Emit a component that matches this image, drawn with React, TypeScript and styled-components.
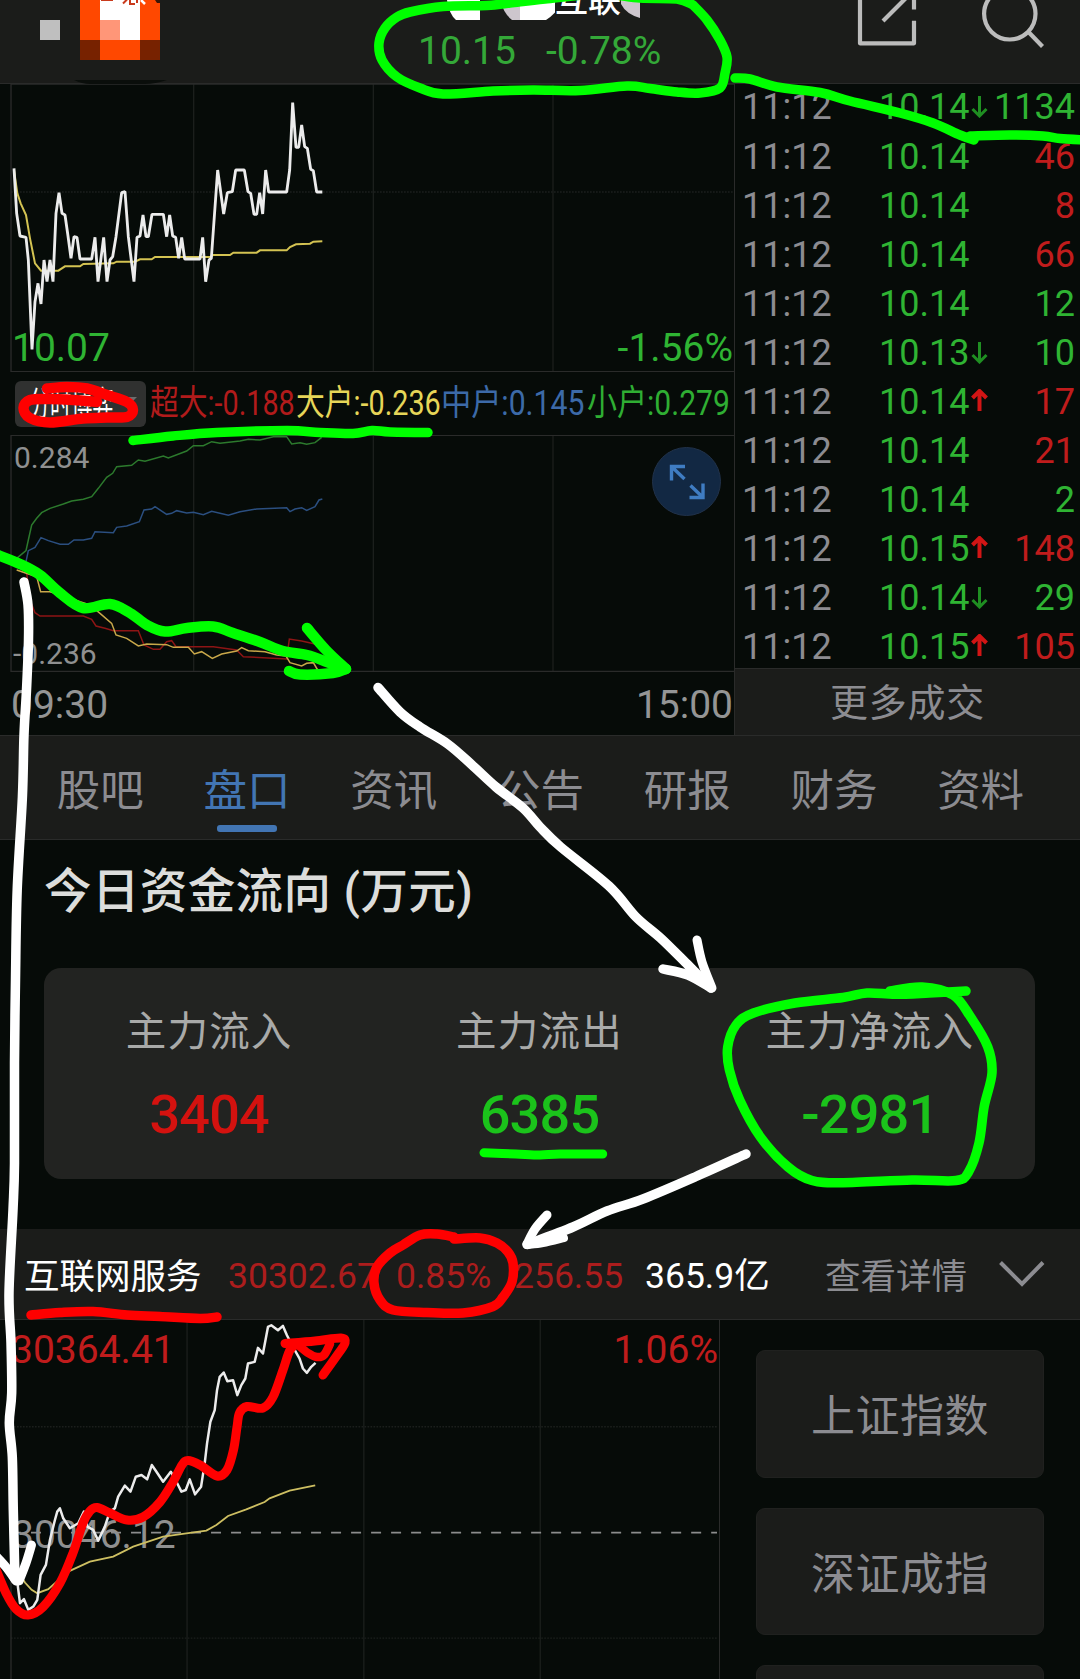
import React from "react";
import styled, { createGlobalStyle, css } from "styled-components";

const colors = {
  page: "#060b08",
  panel: "#1b1c1a",
  card: "#222321",
  line: "#2a2b2a",
  grid: "#1b1f1c",
  up: "#c01c1c",
  down: "#2fb433",
  muted: "#8c8c91",
  blue: "#4275b3",
};

type Point = [number, number];
type Direction = "up" | "down";

const GlobalStyle = createGlobalStyle`
  * {
    box-sizing: border-box;
  }
  html,
  body {
    margin: 0;
    background: ${colors.page};
  }
  body {
    font-family: Roboto, "Noto Sans CJK SC", sans-serif;
    font-weight: 400;
  }
`;

// Catmull-Rom through the given points, written as cubic beziers
const smooth = (points: Point[]) =>
  points.reduce((path, [x, y], i) => {
    if (i === 0) return `M${x} ${y}`;
    const [ax, ay] = points[Math.max(i - 2, 0)];
    const [bx, by] = points[i - 1];
    const [dx, dy] = points[Math.min(i + 1, points.length - 1)];
    return `${path} C${bx + (x - ax) / 6} ${by + (y - ay) / 6} ${x - (dx - bx) / 6} ${y - (dy - by) / 6} ${x} ${y}`;
  }, "");

const trades: { price: string; move?: Direction; volume: string; side: Direction }[] = [
  { price: "10.14", move: "down", volume: "1134", side: "down" },
  { price: "10.14", volume: "46", side: "up" },
  { price: "10.14", volume: "8", side: "up" },
  { price: "10.14", volume: "66", side: "up" },
  { price: "10.14", volume: "12", side: "down" },
  { price: "10.13", move: "down", volume: "10", side: "down" },
  { price: "10.14", move: "up", volume: "17", side: "up" },
  { price: "10.14", volume: "21", side: "up" },
  { price: "10.14", volume: "2", side: "down" },
  { price: "10.15", move: "up", volume: "148", side: "up" },
  { price: "10.14", move: "down", volume: "29", side: "down" },
  { price: "10.15", move: "up", volume: "105", side: "up" },
];

const legend = [
  { text: "超大:-0.188", color: "#b11b1b", stretch: 0.822 },
  { text: "大户:-0.236", color: "#e6d658", stretch: 0.822 },
  { text: "中户:0.145", color: "#3c6aa8", stretch: 0.862 },
  { text: "小户:0.279", color: "#2fae33", stretch: 0.858 },
];

const tabs = ["股吧", "盘口", "资讯", "公告", "研报", "财务", "资料"];

const flows: { label: string; value: string; side: Direction }[] = [
  { label: "主力流入", value: "3404", side: "up" },
  { label: "主力流出", value: "6385", side: "down" },
  { label: "主力净流入", value: "-2981", side: "down" },
];

// Chart series, in thirds of a pixel
const priceLine =
  "42,505 50,640 60,708 78,712 85,780 96,1048 105,905 114,850 123,912 132,780 141,845 150,780 159,845 168,640 177,578 186,640 195,645 204,708 213,775 222,710 231,712 240,777 275,777 285,712 294,845 311,712 321,845 330,780 338,770 348,710 365,578 375,575 385,710 402,845 411,712 420,708 429,645 438,710 445,710 456,643 490,643 500,710 509,645 518,708 527,712 536,775 545,712 554,777 600,777 608,712 617,845 627,780 634,775 653,510 671,642 682,578 697,575 707,510 733,510 744,575 752,580 762,643 770,643 779,578 788,642 797,510 806,576 860,576 869,510 878,308 888,442 896,442 905,375 914,440 922,445 932,508 940,512 950,576 967,576";
const averageLine =
  "42,510 52,580 62,610 78,645 90,715 105,790 123,812 175,812 195,799 240,799 250,792 340,790 350,785 405,785 420,778 455,778 465,771 630,771 640,765 690,765 700,758 770,758 780,751 860,751 870,741 888,733 930,731 940,725 967,724";
const flowLines = [
  {
    color: "#2c7a2d",
    points:
      "50,655 78,632 85,600 95,555 110,535 125,518 150,505 190,492 215,483 250,478 275,470 295,445 320,412 338,400 350,380 395,376 415,360 435,364 490,348 505,354 560,333 580,317 610,317 635,305 660,310 720,303 745,298 780,300 820,290 860,290 875,312 900,308 920,313 945,308 965,292",
  },
  {
    color: "#2b4f80",
    points:
      "78,665 85,632 105,622 123,593 145,602 180,613 205,613 222,600 250,600 275,595 285,575 340,578 350,562 380,558 418,545 432,510 455,507 465,500 500,523 515,520 530,512 560,519 580,517 610,524 635,514 685,526 720,515 770,507 860,503 870,515 885,507 905,503 920,511 945,500 957,480 967,477",
  },
  {
    color: "#8d1515",
    points:
      "80,700 90,780 105,818 120,828 250,828 275,838 288,858 315,865 340,872 415,872 432,915 460,928 480,928 500,905 515,902 528,920 640,920 710,930 730,950 860,957 868,897 905,903 945,912",
  },
  {
    color: "#c9a84a",
    points:
      "50,690 110,710 122,755 150,755 200,770 240,785 270,795 300,820 335,850 348,885 380,895 415,918 440,912 500,914 520,922 565,922 583,942 605,935 637,955 665,942 710,933 725,923 745,932 795,935 830,945 858,948 870,968 905,978 920,970 940,968 953,990",
  },
];
const indexLine =
  "38,1060 50,1100 60,1180 72,1168 85,1200 100,1190 112,1170 122,1095 138,1065 150,990 165,930 172,905 180,895 190,925 200,940 210,955 235,940 252,905 262,950 280,960 295,992 315,950 330,905 345,895 355,860 375,827 392,845 408,800 425,795 442,808 456,765 470,785 490,815 513,785 530,815 545,845 558,840 570,808 586,853 604,830 615,760 622,700 632,635 645,600 652,540 660,500 672,487 683,513 700,510 713,555 725,525 737,505 745,460 765,455 775,413 790,430 805,350 815,345 835,360 850,347 862,375 880,410 900,445 910,475 922,488 935,470 948,458";
const indexAverage =
  "38,1060 75,1118 95,1140 112,1150 145,1138 205,1085 270,1055 340,1040 400,1010 490,980 560,970 620,962 650,945 685,918 740,898 795,876 810,865 870,842 947,826";

// Marker strokes drawn over the page
const strokes: { color: string; width: number; points: Point[] }[] = [
  {
    color: "#00ff00",
    width: 9.5,
    points: [
      [693, 5], [707, 20], [720, 40], [727, 57], [725, 73], [720, 88], [700, 93], [677, 92], [650, 88.5],
      [627, 86], [580, 90.5], [533, 90], [493, 91], [443, 94], [420, 88], [397, 77], [382, 60], [379, 43],
      [385, 28], [397, 17], [410, 12], [443, 6.5], [487, 5.5], [510, 3], [545, -1], [600, -6], [640, -2],
      [677, -1], [693, 5],
    ],
  },
  {
    color: "#00ff00",
    width: 9.5,
    points: [
      [735, 78], [750, 79], [777, 87], [820, 92.5], [850, 101], [900, 113], [933, 123], [960, 135], [974, 140],
    ],
  },
  { color: "#00ff00", width: 9.5, points: [[970, 136], [1010, 135], [1043, 136], [1060, 138.5], [1085, 140]] },
  {
    color: "#00ff00",
    width: 9.5,
    points: [
      [133, 440.5], [173, 436], [217, 432.5], [287, 430.5], [320, 432.5], [353, 433.5], [372, 430.5],
      [390, 432], [428, 432.5],
    ],
  },
  {
    color: "#00ff00",
    width: 10.5,
    points: [
      [-5, 554], [20, 564], [40, 575], [60, 593], [83, 608], [110, 604], [130, 613], [147, 625], [165, 631.5],
      [187, 628], [213, 626.5], [233, 633], [260, 642], [283, 651], [307, 655], [327, 662], [345, 669],
    ],
  },
  { color: "#00ff00", width: 10.5, points: [[307, 628], [326, 650], [346, 669]] },
  { color: "#00ff00", width: 10.5, points: [[346, 669], [333, 673], [300, 674.5], [289, 671]] },
  { color: "#00ff00", width: 9, points: [[484, 1152.7], [516, 1154], [540, 1155], [560, 1154], [602.7, 1154]] },
  {
    color: "#00ff00",
    width: 9.5,
    points: [
      [966, 991], [929, 993], [895, 994.3], [867, 993], [843, 997.5], [795, 1003], [753.5, 1013], [736, 1025],
      [727.7, 1047], [729.4, 1070], [739.7, 1100], [760.4, 1137], [788, 1167], [812, 1180.5], [843, 1182.7],
      [912, 1180], [956, 1180.5], [968.7, 1171.7], [979, 1143], [984.2, 1106.5], [992, 1073], [987.7, 1046.7],
      [970.4, 1016.7], [953, 995], [922, 987], [890, 991],
    ],
  },
  {
    color: "#ff0000",
    width: 10.5,
    points: [
      [47, 388.5], [67, 387], [87, 388.5], [107, 395], [127, 402], [133, 410], [127, 417], [107, 417.5],
      [83, 418.5], [50, 422.5], [30, 418], [23.5, 408], [30, 400], [50, 399], [73, 400], [97, 402],
    ],
  },
  {
    color: "#ff0000",
    width: 9.5,
    points: [[31, 1315], [60, 1312.5], [93, 1311.5], [127, 1315], [160, 1316.5], [200, 1318.5], [217, 1317]],
  },
  {
    color: "#ff0000",
    width: 9.5,
    points: [
      [454, 1239], [480, 1238], [497, 1243], [508, 1252], [513, 1263], [512, 1282], [503, 1297], [493, 1306.5],
      [463, 1313], [427, 1312.5], [393, 1310], [380, 1300], [374, 1283], [377, 1267], [390, 1253], [403, 1245],
      [420, 1235], [437, 1234], [454, 1237],
    ],
  },
  {
    color: "#ff0000",
    width: 9,
    points: [
      [-5, 1567], [6, 1593], [16, 1609], [28, 1615], [43, 1607], [60, 1583], [73, 1553], [83, 1523], [90, 1511],
      [97, 1507.5], [110, 1513], [127, 1520], [143, 1517], [160, 1502], [173, 1482], [182, 1465], [188, 1460.5],
      [200, 1465], [217, 1476], [227, 1470], [233.5, 1450], [237, 1427], [239.5, 1413], [247, 1406.5],
      [263, 1408], [273, 1397], [283, 1370], [290, 1350], [298, 1343],
    ],
  },
  { color: "#ff0000", width: 9, points: [[285, 1343.5], [315, 1341], [341, 1338], [345, 1343], [338, 1354], [323, 1375]] },
  { color: "#ff0000", width: 8.5, points: [[298, 1345], [308, 1353], [317, 1357], [324, 1355], [330, 1344]] },
  {
    color: "#fff",
    width: 9.5,
    points: [
      [24, 582], [28, 605], [28.5, 640], [26.5, 690], [24, 735], [22.4, 797], [17.2, 890], [15.5, 980],
      [14.5, 1063], [14.5, 1163], [13, 1210], [9, 1293], [11, 1343], [11.7, 1393], [9.3, 1423], [12.3, 1457],
      [13.3, 1510], [15, 1579],
    ],
  },
  { color: "#fff", width: 9, points: [[-4, 1556], [6, 1567], [16, 1581]] },
  { color: "#fff", width: 9, points: [[31.5, 1545], [26, 1563], [19, 1581]] },
  {
    color: "#fff",
    width: 9.5,
    points: [
      [378, 687.5], [400, 712], [420, 727], [447.7, 744], [472, 765], [496, 787], [523, 808], [540, 827],
      [560.7, 847], [609, 886], [636, 917], [660.5, 938], [688, 965], [711, 988],
    ],
  },
  { color: "#fff", width: 9, points: [[697, 940], [702, 962], [712, 988]] },
  { color: "#fff", width: 9.5, points: [[663, 969], [688, 975], [711, 988]] },
  { color: "#fff", width: 9.5, points: [[746, 1154], [695, 1177], [643, 1199], [607, 1211], [573, 1227], [527, 1244.5]] },
  { color: "#fff", width: 9, points: [[547, 1215], [535, 1229], [527, 1244]] },
  { color: "#fff", width: 8, points: [[527, 1245], [543, 1243], [564, 1238]] },
];

const App = () => (
  <Page>
    <GlobalStyle />
    <Header>
      <HeaderLogo />
      <HeaderQuote>
        <StockName>
          <NameMask />
          互联
          <NameCorner />
        </StockName>
        <HeaderPrice>
          <span>10.15</span>
          <span>-0.78%</span>
        </HeaderPrice>
      </HeaderQuote>
      <HeaderIcons />
    </Header>
    <QuoteArea>
      <ChartColumn>
        <PriceChart>
          <ChartLabel $bottom={1} $left={12} $color={colors.down}>10.07</ChartLabel>
          <ChartLabel $bottom={1} $right={1} $color={colors.down}>-1.56%</ChartLabel>
          <Plot viewBox="0 252 2202 864">
            <Grid columns={[581, 1120, 1659]} rows={[576]} top={252} bottom={1115} right={2202} />
            <polyline points={averageLine} stroke="#d3c352" strokeWidth="6" />
            <polyline points={priceLine} stroke="#ececec" strokeWidth="8.5" strokeLinejoin="bevel" />
          </Plot>
        </PriceChart>
        <Legend>
          <IndicatorButton>
            <IndicatorName>分时博弈</IndicatorName>
            <Caret />
          </IndicatorButton>
          {legend.map(({ text, color, stretch }) => (
            <LegendItem key={text} $color={color}>
              <Stretch $by={stretch}>{text}</Stretch>
            </LegendItem>
          ))}
        </Legend>
        <FlowChart>
          <ChartLabel $top={5} $left={14} $size={30}>0.284</ChartLabel>
          <ChartLabel $bottom={1} $left={13} $size={30}>-0.236</ChartLabel>
          <Plot viewBox="0 285 2202 711">
            <Grid columns={[581, 1120, 1659]} rows={[]} top={286} bottom={994} right={2202} />
            {flowLines.map(({ color, points }) => (
              <polyline key={color} points={points} stroke={color} strokeWidth="4.5" />
            ))}
          </Plot>
          <ExpandButton aria-label="expand">
            <svg width="70" height="70" fill="none" stroke="#3f7cc2" strokeWidth="3.4">
              <path d="M19.5 33.5V19.500H33M20 20L32.500 32M51 36.500V50.500H37.500M50.500 50L38.500 38.500" />
            </svg>
          </ExpandButton>
        </FlowChart>
        <TimeAxis>
          <span>09:30</span>
          <span>15:00</span>
        </TimeAxis>
      </ChartColumn>
      <TapeColumn>
        <Tape>
          {trades.map(({ price, move, volume, side }, i) => (
            <TapeRow key={i}>
              <TapeTime>11:12</TapeTime>
              <Tone $side="down">{price}</Tone>
              <span>{move && <MoveArrow side={move} />}</span>
              <Volume $side={side}>{volume}</Volume>
            </TapeRow>
          ))}
        </Tape>
        <MoreTrades>更多成交</MoreTrades>
      </TapeColumn>
    </QuoteArea>
    <Tabs>
      {tabs.map((tab) => (
        <Tab key={tab} $active={tab === "盘口"}>
          {tab}
        </Tab>
      ))}
    </Tabs>
    <FundSection>
      <SectionTitle>今日资金流向 (万元)</SectionTitle>
      <FundCard>
        {flows.map(({ label, value, side }) => (
          <FundCell key={label}>
            <FundLabel>{label}</FundLabel>
            <FundValue $side={side}>{value}</FundValue>
          </FundCell>
        ))}
      </FundCard>
    </FundSection>
    <IndexBar>
      <IndexName>互联网服务</IndexName>
      <IndexFigure $width={168}>30302.67</IndexFigure>
      <IndexFigure $width={118}>0.85%</IndexFigure>
      <IndexFigure $width={131}>256.55</IndexFigure>
      <Turnover>365.9亿</Turnover>
      <Details>查看详情</Details>
      <svg width="46" height="27" fill="none" stroke={colors.muted} strokeWidth="4">
        <path d="M1.500 1.500L23 23L44 1.500" />
      </svg>
    </IndexBar>
    <IndexArea>
      <IndexChart>
        <ChartLabel $top={7} $left={11} $color={colors.up}>30364.41</ChartLabel>
        <ChartLabel $top={7} $right={1} $color={colors.up}>1.06%</ChartLabel>
        <ChartLabel $top={192} $left={12}>30046.12</ChartLabel>
        <Plot viewBox="0 330 2160 1077">
          <Grid columns={[562, 1093, 1623]} rows={[650, 1285]} top={320} bottom={1500} right={2157} />
          <path d="M33 968H2154" stroke="#8c8d8d" strokeWidth="5" strokeDasharray="30 30.100" />
          <polyline points={indexAverage} stroke="#cdbf62" strokeWidth="5.5" />
          <polyline points={indexLine} stroke="#ececec" strokeWidth="7.5" strokeLinejoin="round" />
        </Plot>
      </IndexChart>
      <IndexList>
        <IndexButton>上证指数</IndexButton>
        <IndexButton>深证成指</IndexButton>
        <IndexButton />
      </IndexList>
    </IndexArea>
    <MarkerLayer viewBox="0 0 1080 1679">
      {strokes.map(({ color, width, points }, i) => (
        <path key={i} d={smooth(points)} stroke={color} strokeWidth={width} />
      ))}
    </MarkerLayer>
  </Page>
);

export default App;

const HeaderLogo = () => (
  <svg width="180" height="84" shapeRendering="crispEdges">
    <path fill="#bfbfbf" d="M40 20h20v20H40z" />
    <path fill="#ff4800" d="M80 0h80v60H80z" />
    <path fill="#fff" d="M100 0h40v40h-40z" />
    <path fill="#ff9678" d="M100 20h20v20h-20z" />
    <path fill="#772200" d="M80 40h20v20H80zM140 40h20v20h-20z" />
    <g shapeRendering="auto">
      <path fill="none" stroke="#c93a1c" strokeWidth="2" d="M101 0h12M123 3.500l4-4M130 0v4h5M137 0v3" />
      <path fill="none" stroke="#fff" strokeWidth="2.500" d="M141 0l4 4" />
      <path fill="#3a1508" d="M155 0h5v3h-3z" />
      <path fill="#0a0e0b" d="M74 80H167Q155 84 145 84H90Q82 84 74 80Z" />
    </g>
  </svg>
);

// Pixelated patches that cover most of the stock name
const NameMask = () => (
  <svg width="113" height="22">
    <path fill="#fff" d="M5 0H38V20H14Q7 14 5 0Z" />
    <path fill="#cdc6cd" d="M58 0H78V20H70Q62 14 58 0Z" />
    <path fill="#fff" d="M78 0H122Q114 14 104 20H78Z" />
  </svg>
);

const NameCorner = () => (
  <svg width="20" height="20">
    <path fill="#cdc6cd" d="M0 0H19V18Q5 14 0 4Z" />
  </svg>
);

const HeaderIcons = () => (
  <svg width="230" height="60" fill="none" stroke="#bcbcbc" strokeWidth="4.200">
    <path strokeLinejoin="round" d="M10 -5V43.300H64V20.700M64 9.500V-5M33 21L57.500 -3.500" />
    <circle cx="159.800" cy="13.800" r="25.700" />
    <path d="M178.500 32L192.500 46.500" />
  </svg>
);

const MoveArrow = ({ side }: { side: Direction }) => (
  <Arrow $side={side} width="17" height="24" viewBox="0 0 17 24">
    <path d="M8.500 2V22M1.500 15L8.500 22L15.500 15" />
  </Arrow>
);

type GridProps = { columns: number[]; rows: number[]; top: number; bottom: number; right: number };

const Grid = ({ columns, rows, top, bottom, right }: GridProps) => (
  <>
    <g stroke={colors.grid} strokeWidth="4">
      {columns.map((x) => (
        <path key={x} d={`M${x} ${top}V${bottom}`} />
      ))}
      {rows.map((y) => (
        <path key={y} d={`M33 ${y}H${right}`} strokeDasharray="5 4" />
      ))}
    </g>
    <path d={`M${right} ${top}H33V${bottom}H${right}`} stroke={colors.line} strokeWidth="4" />
  </>
);

const tone = css<{ $side: Direction }>`
  color: ${({ $side }) => ($side === "up" ? colors.up : colors.down)};
`;

const Page = styled.div`
  position: relative;
  width: 1080px;
  height: 1679px;
  overflow: hidden;
  background: ${colors.page};
`;

const Header = styled.header`
  display: flex;
  justify-content: space-between;
  height: 84px;
  border-bottom: 1px solid ${colors.line};
  background: ${colors.panel};
`;

const HeaderQuote = styled.div`
  width: 300px;
  margin-left: 179px;
  margin-right: auto;
`;

const StockName = styled.div`
  display: flex;
  height: 24px;
  padding-left: 83px;
  color: #fff;
  font-size: 33px;
  font-weight: 500;
  line-height: 2px;

  svg {
    flex: none;
  }
`;

const HeaderPrice = styled.div`
  display: flex;
  gap: 30px;
  padding-left: 59px;
  color: #34a838;
  font-size: 39px;
  line-height: 55px;
`;

const QuoteArea = styled.section`
  display: flex;
  height: 651px;
`;

const ChartColumn = styled.div`
  width: 735px;
  border-right: 1px solid ${colors.line};
`;

const PriceChart = styled.div`
  position: relative;
  height: 288px;
`;

const Plot = styled.svg`
  position: relative;
  display: block;
  width: 100%;
  height: 100%;
  fill: none;
`;

const ChartLabel = styled.span<{
  $top?: number;
  $bottom?: number;
  $left?: number;
  $right?: number;
  $size?: number;
  $color?: string;
}>`
  position: absolute;
  top: ${({ $top }) => ($top === undefined ? "auto" : `${$top}px`)};
  bottom: ${({ $bottom }) => ($bottom === undefined ? "auto" : `${$bottom}px`)};
  left: ${({ $left }) => ($left === undefined ? "auto" : `${$left}px`)};
  right: ${({ $right }) => ($right === undefined ? "auto" : `${$right}px`)};
  color: ${({ $color = "#8f9090" }) => $color};
  font-size: ${({ $size = 39 }) => $size}px;
`;

const Legend = styled.div`
  display: flex;
  align-items: center;
  height: 63px;
  padding-left: 15px;
`;

const IndicatorButton = styled.div`
  display: flex;
  align-items: center;
  width: 131px;
  height: 46px;
  margin-right: 4px;
  padding-left: 14px;
  border-radius: 6px;
  background: #303130;
`;

const IndicatorName = styled.span`
  width: 84px;
  padding-bottom: 5px;
  color: #fff;
  font-size: 34px;
  white-space: nowrap;
  transform: scaleX(0.62);
  transform-origin: left;
`;

const Caret = styled.i`
  margin-left: 12px;
  margin-bottom: 8px;
  border: 6px solid transparent;
  border-top-color: #6d6d6d;
  border-bottom: none;
`;

const LegendItem = styled.span<{ $color: string }>`
  width: 145.5px;
  color: ${({ $color }) => $color};
  font-size: 35px;
  line-height: 60px;
  white-space: nowrap;
`;

const Stretch = styled.span<{ $by: number }>`
  display: block;
  transform: scaleX(${({ $by }) => $by});
  transform-origin: left;
`;

const FlowChart = styled.div`
  position: relative;
  height: 237px;
`;

const ExpandButton = styled.button`
  position: absolute;
  top: 12px;
  right: 13px;
  width: 69px;
  height: 69px;
  padding: 0;
  border: 1px solid #21324a;
  border-radius: 50%;
  background: #122843;

  svg {
    display: block;
    margin: -1px;
  }
`;

const TimeAxis = styled.div`
  display: flex;
  justify-content: space-between;
  padding: 1px 1px 0 11px;
  color: #949595;
  font-size: 39px;
  line-height: 65px;
`;

const TapeColumn = styled.div`
  display: flex;
  flex: 1;
  flex-direction: column;
`;

const Tape = styled.div`
  display: flex;
  flex-direction: column;
  justify-content: center;
  height: 584px;
`;

const TapeRow = styled.div`
  display: grid;
  flex: none;
  grid-template-columns: 137px 92px 20px 1fr;
  height: 49.1px;
  padding: 0 5px 0 7px;
  font-size: 36px;
  line-height: 53px;
`;

const TapeTime = styled.span`
  color: ${colors.muted};
`;

const Tone = styled.span`
  ${tone}
`;

const Volume = styled(Tone)`
  text-align: right;
`;

const Arrow = styled.svg<{ $side: Direction }>`
  display: block;
  margin-top: 13px;
  fill: none;
  stroke: ${({ $side }) => ($side === "up" ? "#d21515" : "#1f8f22")};
  stroke-width: ${({ $side }) => ($side === "up" ? 4 : 3)};
  transform: ${({ $side }) => ($side === "up" ? "scaleY(-1)" : "none")};
`;

const MoreTrades = styled.div`
  height: 67px;
  border-top: 1px solid ${colors.line};
  background: ${colors.panel};
  color: ${colors.muted};
  font-size: 38px;
  letter-spacing: 0.8px;
  line-height: 69px;
  text-align: center;
`;

const Tabs = styled.nav`
  display: grid;
  grid-template-columns: repeat(7, 1fr);
  height: 105px;
  padding: 0 26px 0 27px;
  border-top: 1px solid ${colors.line};
  border-bottom: 1px solid ${colors.line};
  background: ${colors.panel};
`;

const Tab = styled.div<{ $active: boolean }>`
  display: flex;
  flex-direction: column;
  align-items: center;
  color: ${({ $active }) => ($active ? colors.blue : colors.muted)};
  font-size: 43.5px;
  line-height: 111px;

  ${({ $active }) =>
    $active &&
    css`
      &::after {
        content: "";
        width: 60px;
        height: 7px;
        margin-top: -22px;
        border-radius: 3px;
        background: ${colors.blue};
      }
    `}
`;

const FundSection = styled.section`
  height: 389px;
  padding: 0 45px 0 44px;
`;

const SectionTitle = styled.h2`
  margin: 0;
  height: 128px;
  color: #dcdddb;
  font-size: 47.5px;
  font-weight: 500;
  letter-spacing: 0.4px;
  line-height: 104px;
`;

const FundCard = styled.div`
  display: grid;
  grid-template-columns: repeat(3, 1fr);
  height: 211px;
  border-radius: 17px;
  background: ${colors.card};
  text-align: center;
`;

const FundCell = styled.div`
  padding-top: 34px;
`;

const FundLabel = styled.div`
  color: #a9aaa9;
  font-size: 40.5px;
  letter-spacing: 1.2px;
  line-height: 60px;
`;

const FundValue = styled.div<{ $side: Direction }>`
  color: ${({ $side }) => ($side === "up" ? "#d4120f" : "#1bc31b")};
  font-size: 54px;
  font-weight: 500;
  letter-spacing: -0.8px;
  line-height: 106px;
`;

const IndexBar = styled.div`
  display: flex;
  align-items: center;
  height: 91px;
  padding-left: 24px;
  border-bottom: 1px solid ${colors.line};
  background: ${colors.panel};
  font-size: 35.500px;
  white-space: nowrap;
`;

const IndexName = styled.span`
  width: 204px;
  padding-bottom: 2px;
  color: #fff;
`;

const IndexFigure = styled.span<{ $width: number }>`
  width: ${({ $width }) => $width}px;
  padding-top: 3px;
  color: #ac1d1d;
`;

const Turnover = styled.span`
  width: 180px;
  padding-bottom: 3px;
  color: #fff;
`;

const Details = styled.span`
  width: 174px;
  padding-bottom: 2px;
  color: ${colors.muted};
`;

const IndexArea = styled.section`
  display: flex;
  height: 359px;
`;

const IndexChart = styled.div`
  position: relative;
  width: 720px;
  border-right: 1px solid ${colors.line};
`;

const IndexList = styled.div`
  display: flex;
  flex: 1;
  flex-direction: column;
  gap: 30px;
  padding: 30px 36px 0;
`;

const IndexButton = styled.div`
  flex: none;
  height: 127.500px;
  border: 1px solid #20211f;
  border-radius: 9px;
  background: ${colors.panel};
  color: ${colors.muted};
  font-size: 44px;
  letter-spacing: 0.5px;
  line-height: 133px;
  text-align: center;
`;

const MarkerLayer = styled.svg`
  position: absolute;
  inset: 0;
  fill: none;
  pointer-events: none;
  stroke-linecap: round;
  stroke-linejoin: round;
`;
